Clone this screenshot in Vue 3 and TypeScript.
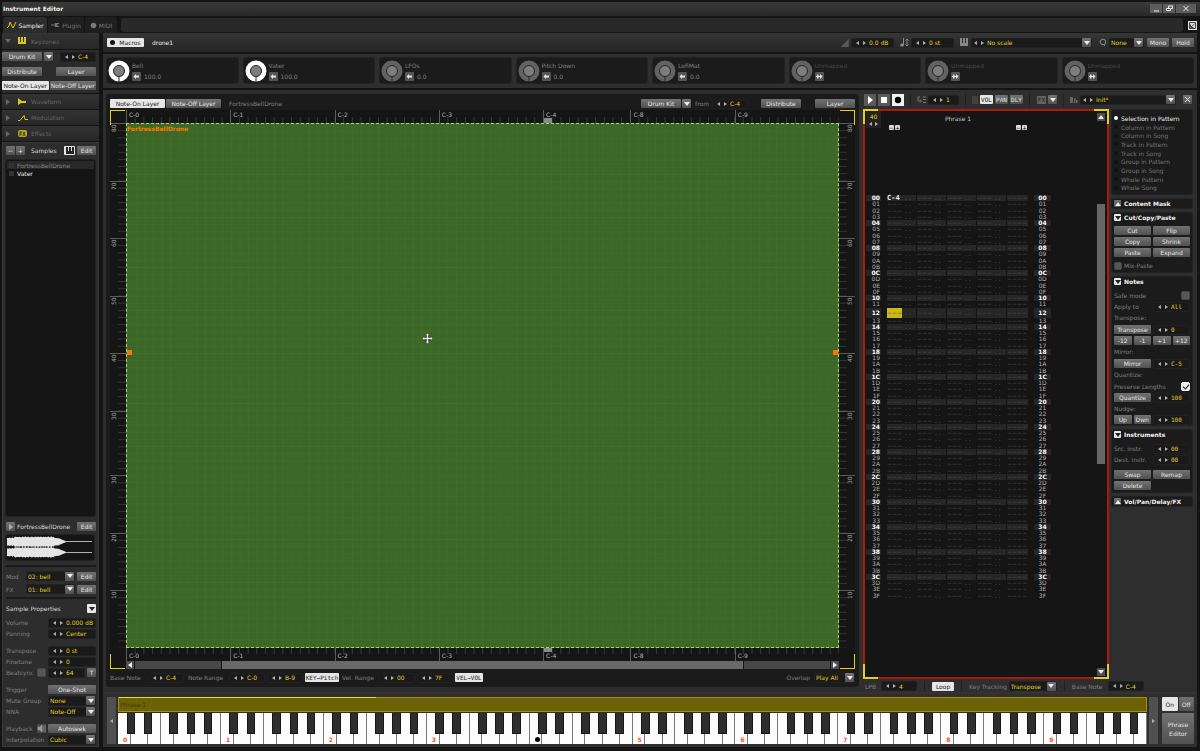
<script setup lang="ts">
import { h } from 'vue'
import type { FunctionalComponent } from 'vue'

const Spin: FunctionalComponent<{ label: string; value: string }> = (p) =>
  h('span', { class: 'spin' }, [
    h('button', { class: 'arr', 'aria-label': `${p.label} down` }, [h('i', { class: 'tri left' })]),
    h('button', { class: 'arr', 'aria-label': `${p.label} up` }, [h('i', { class: 'tri right' })]),
    h('input', { type: 'text', value: p.value, 'aria-label': p.label }),
  ])
Spin.props = ['label', 'value']

const Combo: FunctionalComponent<{ label: string; value: string; step?: boolean }> = (p) =>
  h('span', { class: 'combo' }, [
    ...(p.step !== undefined
      ? [
          h('button', { class: 'arr', 'aria-label': `Previous ${p.label}` }, [h('i', { class: 'tri left' })]),
          h('button', { class: 'arr', 'aria-label': `Next ${p.label}` }, [h('i', { class: 'tri right' })]),
        ]
      : []),
    h('select', { 'aria-label': p.label }, [h('option', p.value)]),
    h('span', { class: 'dd' }, [h('i', { class: 'tri down' })]),
  ])
Combo.props = ['label', 'value', 'step']

interface Macro { name: string; value?: string; full?: boolean }
const macros: Macro[] = [
  { name: 'Bell', value: '100.0', full: true },
  { name: 'Vater', value: '100.0', full: true },
  { name: 'LFOs', value: '0.0' },
  { name: 'Pitch Down', value: '0.0' },
  { name: 'LofiMat', value: '0.0' },
  { name: 'Unmapped' },
  { name: 'Unmapped' },
  { name: 'Unmapped' },
]

const octaves = [
  { name: 'C-0', n: 12 }, { name: 'C-1', n: 12 }, { name: 'C-2', n: 12 }, { name: 'C-3', n: 12 },
  { name: 'C-4', n: 10 }, { name: 'C-8', n: 12 }, { name: 'C-9', n: 12 },
]
const velocities = [
  { name: '80', n: 8 }, { name: '70', n: 8 }, { name: '60', n: 8 }, { name: '50', n: 8 }, { name: '40', n: 8 },
  { name: '30', n: 9 }, { name: '30', n: 8 }, { name: '20', n: 8 }, { name: '10', n: 8 },
]

const EMPTY = '−−−'
const rows = Array.from({ length: 64 }, (_, i) => ({
  id: i.toString(16).toUpperCase().padStart(2, '0'),
  beat: i % 4 === 0,
  cursor: i === 18,
  first: i === 0 ? 'C-4' : EMPTY,
}))

const scopes = [
  'Selection in Pattern', 'Column in Pattern', 'Column in Song', 'Track in Pattern', 'Track in Song',
  'Group in Pattern', 'Group in Song', 'Whole Pattern', 'Whole Song',
]
const whites = ['C', 'D', 'E', 'F', 'G', 'A', 'B']
const blacks = ['C#', 'D#', 'F#', 'G#', 'A#']

function wave(mid: number): string {
  const top: string[] = []
  const bottom: string[] = []
  for (let x = 1; x <= 89; x++) {
    const noise = Math.abs(Math.sin(x * 7.3) + Math.sin(x * 2.9)) * 0.5
    let a = 0.4
    if (x < 54) a = 4.2 + noise + (x > 8 && x < 50 ? 0.4 : -0.6)
    else if (x < 62) a = 3.8 - (x - 54) * 0.42
    top.push(`${x},${(mid - a).toFixed(1)}`)
    bottom.unshift(`${x},${(mid + a).toFixed(1)}`)
  }
  return [...top, ...bottom].join(' ')
}
const waves = [wave(7), wave(18)]
</script>

<template>
  <div class="app">
    <header class="title">
      <h1>Instrument Editor</h1>
      <div class="win">
        <button aria-label="Minimize"><svg width="12" height="9"><path d="M4 7h5" stroke="#eee" /></svg></button>
        <button aria-label="Restore"><svg width="12" height="9"><path d="M3.500 4.500h4v2h-4zM5.500 4V2h4v2.500H8" fill="none" stroke="#eee" /></svg></button>
        <button class="wide" aria-label="Close"><svg width="20" height="9"><path d="M7.500 2l5 5M12.500 2l-5 5" stroke="#eee" /></svg></button>
      </div>
    </header>

    <nav class="tabs">
      <button class="tab on"><svg width="10" height="8"><path d="M0 7l2-2 1-4 3 6 1-2 2-4" fill="none" stroke="#d8c81e" /></svg>Sampler</button>
      <button class="tab"><svg width="9" height="8"><path d="M0 4h3M4 2.500h2v3H4zM6 2.500h2M6 5.500h2" fill="#777" stroke="#777" /></svg>Plugin</button>
      <button class="tab midi"><svg width="7" height="7"><circle cx="3.500" cy="3.500" r="2.800" fill="#777" /></svg>MIDI</button>
      <div class="tabfill"></div>
      <button class="detach" aria-label="Detach"><svg width="9" height="9"><path d="M1.500 1.500h6v6h-6zM2.500 3.500v3h3M3 6l3.500-3" fill="none" stroke="#444" /></svg></button>
    </nav>

    <div class="body">
      <aside class="side">
        <h2 class="sec first"><i class="tri down dim"></i><svg width="9" height="8"><path d="M0 0h2v5h1V0h2v5h1V0h2v7H0z" fill="#d8c81e" /></svg>Keyzones</h2>
        <div class="kz">
          <div class="line"><button class="btn w40">Drum Kit</button><button class="dd" aria-label="Drum kit options"><i class="tri down"></i></button><Spin class="push w36" label="Kit start note" value="C-4" /></div>
          <div class="line two-btn"><button class="btn w40">Distribute</button><button class="btn w40 push">Layer</button></div>
          <div class="line seg"><button class="btn on">Note-On Layer</button><button class="btn">Note-Off Layer</button></div>
        </div>
        <h2 class="sec"><i class="tri right dim"></i><svg width="9" height="8"><path d="M0 0v7l3-2h5V3H4z" fill="#d8c81e" /></svg>Waveform</h2>
        <h2 class="sec"><i class="tri right dim"></i><svg width="11" height="8"><path d="M0 6.500h2l4-5 1 4h4" fill="none" stroke="#d8c81e" /></svg>Modulation</h2>
        <h2 class="sec"><i class="tri right dim"></i><svg width="10" height="8"><rect width="9" height="7" rx="2" fill="#b5a71c" /><path d="M2 6V2h2M2 4h2M5 2l2 4M7 2L5 6" fill="none" stroke="#292708" stroke-width=".8" /></svg>Effects</h2>

        <section class="samples">
          <div class="line head">
            <button class="btn sq">−</button><button class="btn sq plus">+</button>
            <b>Samples</b>
            <button class="btn on ico" aria-label="Keyboard"><svg width="8" height="7"><path d="M0 0h2v4h1V0h2v4h1V0h2v7H0z" fill="#222" /></svg></button>
            <button class="btn w19 ed">Edit</button>
          </div>
          <ul class="list">
            <li class="sel"><i></i>FortressBellDrone</li>
            <li><i></i>Vater</li>
          </ul>
          <div class="line play">
            <button class="dd" aria-label="Play sample"><i class="tri right"></i></button><span>FortressBellDrone</span><button class="btn w19 push">Edit</button>
          </div>
          <svg class="wave" viewBox="0 0 91 26" preserveAspectRatio="none"><polygon v-for="w in waves" :key="w" :points="w" fill="#e4e4e4" /></svg>
          <hr />
          <div class="line mod"><label>Mod</label><Combo label="Mod" value="02: bell" /><button class="btn w19">Edit</button></div>
          <div class="line mod"><label>FX</label><Combo label="FX" value="01: bell" /><button class="btn w19">Edit</button></div>
          <hr />
          <div class="line props"><span>Sample Properties</span><button class="dd inv push" aria-label="Collapse properties"><i class="tri down"></i></button></div>
          <div class="group">
            <div class="row"><label>Volume</label><Spin label="Volume" value="0.000 dB" /></div>
            <div class="row"><label>Panning</label><Spin label="Panning" value="Center" /></div>
          </div>
          <div class="group">
            <div class="row"><label>Transpose</label><Spin label="Transpose" value="0 st" /></div>
            <div class="row"><label>Finetune</label><Spin label="Finetune" value="0" /></div>
            <div class="row beatsync"><label for="beat">Beatsync</label><input id="beat" type="checkbox" class="chk" /><Spin label="Beatsync lines" value="64" /><button class="btn t">T</button></div>
          </div>
          <div class="group">
            <div class="row"><label>Trigger</label><button class="btn">One-Shot</button></div>
            <div class="row"><label>Mute Group</label><Combo label="Mute Group" value="None" /></div>
            <div class="row"><label>NNA</label><Combo label="NNA" value="Note-Off" /></div>
          </div>
          <div class="group">
            <div class="row beatsync"><label>Playback</label><button class="spk" aria-label="Playback monitor"><svg width="9" height="9"><path d="M1 3h2l2-2v7L3 6H1zM6 2v5M8 1v7" fill="#999" stroke="#999" stroke-width=".7" /></svg></button><button class="btn">Autoseek</button></div>
            <div class="row"><label>Interpolation</label><Combo label="Interpolation" value="Cubic" /></div>
          </div>
        </section>
      </aside>

      <main class="main">
        <div class="instbar">
          <button class="btn on macrobtn"><i></i>Macros</button>
          <span class="iname">drone1</span>
          <svg class="push" width="8" height="8"><path d="M0 8h7.500V0z" fill="#6c6c6c" /><path d="M2 8V5M4 8V3M6 8V1" stroke="#303030" stroke-width=".6" /></svg>
          <Spin class="w43" label="Instrument volume" value="0.0 dB" />
          <svg class="gi" width="9" height="9"><ellipse cx="2" cy="7" rx="2" ry="1.500" fill="#888" /><path d="M3.500 7V0M7 1v7M5.500 2.500L7 1l1.500 1.500M5.500 6.500L7 8l1.500-1.500" fill="none" stroke="#888" /></svg>
          <Spin class="w43" label="Instrument transpose" value="0 st" />
          <svg class="gi" width="9" height="9"><path d="M0 0h2v5h1V0h2v5h1V0h2v8H0z" fill="#888" /></svg>
          <Combo class="scale" label="scale" value="No scale" step />
          <svg class="gi q" width="8" height="9"><circle cx="4" cy="4" r="2.800" fill="none" stroke="#888" /><path d="M4 6l2 2" stroke="#888" /></svg>
          <Combo class="w35" label="Trigger quantize" value="None" />
          <button class="btn w22">Mono</button>
          <button class="btn w22">Hold</button>
        </div>

        <div class="macros">
          <div v-for="(m, i) in macros" :key="i" class="macro" :class="{ off: !m.value }">
            <svg width="24" height="24" viewBox="0 0 24 24">
              <circle cx="12" cy="12" r="8" fill="none" :stroke="m.full ? '#fff' : '#626262'" stroke-width="5" />
              <circle cx="12" cy="12" r="5.500" fill="#7d7d7d" stroke="#2b2b2b" />
              <path d="M12 17v6" stroke="#2b2b2b" />
            </svg>
            <div>
              <span>{{ m.name }}</span>
              <p><button class="map" :aria-label="'Map ' + m.name"><svg width="9" height="9"><path :d="m.value ? 'M1.500 4.500L4 2v1.500h3v2H4V7z' : 'M2 2.500h1.500v4H2zM5 2l2.500 2.500L5 7zM1 4h5v1H1z'" fill="#e6e6e6" /></svg></button>{{ m.value }}</p>
            </div>
          </div>
        </div>

        <div class="work">
          <section class="editor">
            <div class="etool">
              <button class="btn on w55">Note-On Layer</button><button class="btn w55">Note-Off Layer</button>
              <span class="ename">FortressBellDrone</span>
              <button class="btn w40 push">Drum Kit</button><button class="dd" aria-label="Drum kit menu"><i class="tri down"></i></button>
              <span class="from">from</span><Spin class="w36" label="From note" value="C-4" />
              <button class="btn w40 dist">Distribute</button><button class="btn w40 lay">Layer</button>
            </div>
            <div class="zone">
              <i class="corner tl"></i><i class="corner tr"></i><i class="corner bl"></i><i class="corner br"></i>
              <div class="hruler top"><span v-for="o in octaves" :key="o.name" :class="{ base: o.name === 'C-4' }" :style="{ flex: o.n }">{{ o.name }}</span></div>
              <div class="vruler"><span v-for="(v, i) in velocities" :key="i" :style="{ flex: v.n }"><em>{{ v.name }}</em></span></div>
              <div class="green">
                <b>FortressBellDrone</b>
                <i class="handle l"></i><i class="handle r"></i>
                <svg class="move" width="11" height="11" viewBox="0 0 13 13"><path d="M6.500 0L9 3H7.500v2.500H10V4l3 2.500L10 9V7.500H7.500V10H9l-2.500 3L4 10h1.500V7.500H3V9L0 6.500 3 4v1.500h2.500V3H4z" fill="#fff" stroke="#222" stroke-width=".6" /></svg>
              </div>
              <div class="vruler r"><span v-for="(v, i) in velocities" :key="i" :style="{ flex: v.n }"><em>{{ v.name }}</em></span></div>
              <div class="hruler bottom"><span v-for="o in octaves" :key="o.name" :class="{ base: o.name === 'C-4' }" :style="{ flex: o.n }">{{ o.name }}</span></div>
              <div class="hscroll">
                <button class="sbtn" aria-label="Scroll left"><i class="tri left"></i></button>
                <i class="trk"></i><i class="thumb"></i><i class="trk"></i>
                <button class="sbtn" aria-label="Scroll right"><i class="tri right"></i></button>
              </div>
            </div>
            <div class="efoot">
              <label class="l1">Base Note</label><Spin class="w36" label="Base Note" value="C-4" />
              <label class="l2">Note Range</label><Spin class="w36" label="Note from" value="C-0" /><Spin class="w36" label="Note to" value="B-9" />
              <button class="btn on mini w34">KEY→Pitch</button>
              <label class="l3">Vel. Range</label><Spin class="w36" label="Velocity from" value="00" /><Spin class="w36" label="Velocity to" value="7F" />
              <button class="btn on mini w28">VEL→VOL</button>
              <label class="push">Overlap</label><Combo class="w41" label="Overlap" value="Play All" />
            </div>
          </section>

          <section class="phrase">
            <div class="ptool">
              <button class="transport" aria-label="Play"><svg width="12" height="12"><path d="M4 2l5 4-5 4z" fill="#fff" /></svg></button>
              <button class="transport" aria-label="Stop"><svg width="12" height="12"><path d="M3 3h6v6H3z" fill="#fff" /></svg></button>
              <button class="transport on" aria-label="Record"><svg width="12" height="12"><circle cx="6" cy="6" r="3.200" fill="#000" /></svg></button>
              <i class="sep"></i>
              <svg width="9" height="8"><path d="M3 1H1v4h3M3 3.500L4.500 5 3 6.500M6 1h3M6 3.500h3M6 6.500h3" fill="none" stroke="#777" /></svg>
              <Spin class="w31" label="Edit step" value="1" />
              <i class="sep"></i>
              <svg width="6" height="8"><path d="M0 1h6M0 3h6M0 5h6M0 7h6" stroke="#555" /></svg>
              <button class="btn mini on w13">VOL</button><button class="btn mini w13">PAN</button><button class="btn mini w13">DLY</button>
              <i class="sep"></i>
              <span class="fx">FX</span><button class="dd" aria-label="Effect columns"><i class="tri down"></i></button>
              <i class="sep"></i>
              <svg width="8" height="8"><path d="M0 1h3v6H0zM4 2h1.500v5H4zM6 4h1.500v3H6z" fill="#666" /></svg>
              <Combo class="preset" label="preset" value="Init*" step />
              <button class="dd x" aria-label="Close phrase editor"><svg width="9" height="9"><path d="M2 2l5 5M7 2L2 7" stroke="#eee" /></svg></button>
            </div>

            <div class="pmid">
              <div class="pattern">
                <i class="corner tl"></i><i class="corner tr"></i><i class="corner bl"></i><i class="corner br"></i>
                <div class="pcol">
                  <div class="phead">
                    <div class="len"><span>40</span><p><i class="tri left"></i><i class="tri right"></i></p></div>
                    <div class="pt">
                      <span>Phrase 1</span>
                      <p><button aria-label="Fewer note columns">−</button><button aria-label="More note columns">+</button><button class="push" aria-label="Fewer effect columns">−</button><button aria-label="More effect columns">+</button></p>
                    </div>
                  </div>
                  <table>
                    <tbody>
                      <tr v-for="r in rows" :key="r.id" :class="{ beat: r.beat, cur: r.cursor }">
                        <th>{{ r.id }}</th>
                        <td class="n" :class="{ note: r.first !== EMPTY }"><span>{{ r.first }}</span></td><td class="d">. .</td>
                        <td class="n">{{ EMPTY }}</td><td class="d">. .</td>
                        <td class="n">{{ EMPTY }}</td><td class="d">. .</td>
                        <td class="n">{{ EMPTY }}</td><td class="d">. .</td>
                        <td class="f">−−−−</td>
                        <th class="r">{{ r.id }}</th>
                      </tr>
                    </tbody>
                  </table>
                </div>
                <div class="vscroll">
                  <button class="sbtn" aria-label="Scroll up"><i class="tri up"></i></button>
                  <i class="thumb"></i>
                  <button class="sbtn" aria-label="Scroll down"><i class="tri down"></i></button>
                </div>
              </div>

              <div class="tools">
                <div class="box scopes">
                  <label v-for="(s, i) in scopes" :key="s"><input type="radio" name="scope" :checked="i === 0" />{{ s }}</label>
                </div>
                <div class="box"><h3><button class="dd s" aria-label="Expand"><i class="tri up"></i></button>Content Mask</h3></div>
                <div class="box">
                  <h3><button class="dd s inv" aria-label="Collapse"><i class="tri down"></i></button>Cut/Copy/Paste</h3>
                  <div class="grid2 ccp">
                    <button class="btn">Cut</button><button class="btn">Flip</button>
                    <button class="btn">Copy</button><button class="btn">Shrink</button>
                    <button class="btn">Paste</button><button class="btn">Expand</button>
                  </div>
                  <label class="mix"><input type="checkbox" class="chk" />Mix-Paste</label>
                </div>
                <div class="box">
                  <h3><button class="dd s inv" aria-label="Collapse"><i class="tri down"></i></button>Notes</h3>
                  <div class="grid2 notes">
                    <label class="lab" for="safe">Safe mode</label><input id="safe" type="checkbox" class="chk end" />
                    <label class="lab">Apply to</label><Spin class="mono" label="Apply to" value="All" />
                    <span class="lab all cap">Transpose:</span>
                    <button class="btn">Transpose</button><Spin class="mono" label="Transpose by" value="0" />
                    <div class="four all"><button class="btn">-12</button><button class="btn">-1</button><button class="btn">+1</button><button class="btn">+12</button></div>
                    <span class="lab all cap">Mirror:</span>
                    <button class="btn">Mirror</button><Spin class="mono" label="Mirror note" value="C-5" />
                    <span class="lab all cap">Quantize:</span>
                    <div class="all pl"><label class="lab" for="pres">Preserve Lengths</label><input id="pres" type="checkbox" class="chk end" checked /></div>
                    <button class="btn">Quantize</button><Spin class="mono" label="Quantize lines" value="100" />
                    <span class="lab all">Nudge:</span>
                    <div class="two"><button class="btn">Up</button><button class="btn">Dwn</button></div><Spin class="mono" label="Nudge amount" value="100" />
                  </div>
                </div>
                <div class="box">
                  <h3><button class="dd s inv" aria-label="Collapse"><i class="tri down"></i></button>Instruments</h3>
                  <div class="grid2 ins">
                    <label class="lab">Src. instr.</label><Spin class="mono" label="Source instrument" value="00" />
                    <label class="lab">Dest. instr.</label><Spin class="mono" label="Destination instrument" value="00" />
                  </div>
                  <div class="grid2 swap"><button class="btn">Swap</button><button class="btn">Remap</button><button class="btn">Delete</button></div>
                </div>
                <div class="box"><h3><button class="dd s" aria-label="Expand"><i class="tri up"></i></button>Vol/Pan/Delay/FX</h3></div>
              </div>
            </div>

            <div class="pfoot">
              <label>LPB</label><Spin class="w36" label="Lines per beat" value="4" />
              <i class="sep"></i><button class="btn on w22">Loop</button>
              <i class="sep"></i><label>Key Tracking</label><Combo class="w48" label="Key Tracking" value="Transpose" />
              <i class="sep"></i><label>Base Note</label><Spin class="w36" label="Phrase base note" value="C-4" />
            </div>
          </section>
        </div>

        <section class="keys">
          <button class="gut" aria-label="Scroll keyboard left"><i class="tri left"></i></button>
          <div class="kb">
            <div class="pbar"><i></i><span>Phrase 1</span></div>
            <div class="piano">
              <div v-for="o in 10" :key="o" class="oct">
                <button v-for="w in whites" :key="w" class="wk" :class="'k' + w" :aria-label="w + (o - 1)"><template v-if="w === 'C'"><i v-if="o === 5"></i><template v-else>{{ o - 1 }}</template></template></button>
                <button v-for="(b, j) in blacks" :key="b" class="bk" :class="'b' + j" :aria-label="b + (o - 1)"></button>
              </div>
            </div>
          </div>
          <button class="gut" aria-label="Scroll keyboard right"><i class="tri right"></i></button>
          <div class="ped">
            <div><button class="btn on">On</button><button class="btn">Off</button></div>
            <button class="btn big">Phrase<br />Editor</button>
          </div>
        </section>
      </main>
    </div>
  </div>
</template>

<style>
html, body { background: #141414; }
body { margin: 0; }
</style>

<style scoped>
.app { min-height: 100vh; box-sizing: border-box; padding: 2px 2px 4px; display: flex; flex-direction: column; background: #141414; color: #808080; font: 6px/9px "DejaVu Sans", sans-serif; }
.app, .app :deep(*) { box-sizing: border-box; }
.app :deep(button), .app :deep(input), .app :deep(select) { font: inherit; color: inherit; border: 0; margin: 0; padding: 0; border-radius: 0; background: none; }
h1, h2, h3, p, ul { margin: 0; padding: 0; font: inherit; }
svg { display: block; flex: none; }
.app :deep(.tri) { display: block; width: 0; height: 0; border: 2px solid transparent; flex: none; }
.app :deep(.tri.left) { border-width: 3px 4px 3px 0; border-right-color: #b0b0b0; }
.app :deep(.tri.right) { border-width: 3px 0 3px 4px; border-left-color: #b0b0b0; }
.app :deep(.tri.down) { border-width: 4px 3px 0; border-top-color: #eee; }
.app :deep(.tri.up) { border-width: 0 3px 4px; border-bottom-color: #eee; }
.app :deep(.tri.dim.down) { border-top-color: #666; }
.app :deep(.tri.dim.right) { border-left-color: #666; }
.app :deep(.spin), .app :deep(.combo) { display: flex; align-items: center; height: 10px; min-width: 0; background: #1a1a1a; border: 1px solid #212121; border-radius: 2px; color: #e2d324; }
.app :deep(.spin) { padding-left: 2px; }
.app :deep(.arr) { width: 7px; height: 8px; display: grid; place-items: center; flex: none; }
.app :deep(.arr .tri.left) { border-width: 2px 3px 2px 0; }
.app :deep(.arr .tri.right) { border-width: 2px 0 2px 3px; }
.app :deep(.spin input) { flex: 1; width: 0; min-width: 0; height: 9px; margin-left: 1px; }
.app :deep(.combo select) { flex: 1; width: 0; min-width: 0; height: 9px; appearance: none; padding-left: 1px; line-height: 9px; }
.app :deep(.dd) { width: 9px; height: 9px; display: grid; place-items: center; flex: none; background: linear-gradient(#747474, #515151); border-radius: 1px; }
.app :deep(.dd.inv) { background: #e8e8e8; }
.app :deep(.dd.inv .tri) { border-top-color: #222; }
.app :deep(.mono input) { font-family: "DejaVu Sans Mono", monospace; }
.app .btn { height: 9px; line-height: 9px; text-align: center; white-space: nowrap; color: #e6e6e6; background: linear-gradient(#727272, #515151); border-radius: 1px; }
.app .btn.on { background: #e6e6e6; color: #1c1c1c; }
.app .push { margin-left: auto; }
.w13 { width: 13px; } .w19 { width: 19px; } .w22 { width: 22px; } .w28 { width: 28px; } .w31 { width: 31px; } .w34 { width: 34px; } .w35 { width: 35px; }
.w36 { width: 36px; } .w40 { width: 40px; } .w41 { width: 41px; } .w43 { width: 43px; } .w48 { width: 48px; } .w55 { width: 55px; }
.app .chk { appearance: none; width: 9px; height: 9px; flex: none; background: #575757; border: 1px solid #474747; border-radius: 2px; }
.app .chk:checked { background: #f0f0f0; border-color: #f0f0f0; }
.chk:checked::after { content: ""; display: block; width: 3px; height: 5px; margin-left: 2px; border: solid #111; border-width: 0 1px 1px 0; transform: rotate(40deg); }
.app .mini { font-family: "DejaVu Sans Mono", monospace; }

.title { height: 14px; margin-right: -2px; display: flex; align-items: center; padding-right: 4px; background: linear-gradient(#3a3a3a, #292929); }
.title h1 { font-weight: bold; color: #f0f0f0; margin-left: 1px; padding-bottom: 2px; }
.win { margin-left: auto; display: flex; gap: 1px; padding-bottom: 1px; }
.app .win button { width: 12px; height: 9px; background: #5c5c5c; }
.app .win .wide { width: 20px; }
.tabs { height: 16px; margin-top: 1px; display: flex; align-items: stretch; padding-right: 1px; }
.app .tab { display: flex; align-items: center; gap: 2px; width: 36px; justify-content: center; margin-right: 1px; background: #1f1f1f; color: #777; border-radius: 3px 3px 0 0; }
.app .tab.on { width: 44px; background: #2c2c2c; color: #f0f0f0; margin-left: 1px; }
.app .tab.midi { width: 32px; }
.tabfill { flex: 1; margin: 1px 5px 1px 3px; background: #292929; border-radius: 3px; }
.app .detach { align-self: center; width: 9px; height: 9px; background: #e0e0e0; }
.body { flex: 1; display: flex; gap: 4px; }

.side { width: 97px; flex: none; display: flex; flex-direction: column; }
.sec { height: 15px; margin-bottom: 1px; padding-left: 3px; display: flex; align-items: center; color: #666; background: linear-gradient(#333, #272727); }
.sec.first { height: 16px; }
.sec .tri { margin-right: 7px; }
.sec .tri.right { margin-left: 1px; margin-right: 8px; }
.sec svg { margin-right: 3px; width: 10px; }
.line { display: flex; align-items: center; }
.kz { background: #2b2b2b; padding: 2px 3px 3px 0; margin-bottom: 1px; }
.kz .line { height: 9px; margin-bottom: 6px; gap: 2px; }
.kz .line.two-btn { margin-bottom: 5px; }
.kz .line.seg { margin-bottom: 0; gap: 1px; }
.kz .seg .btn { flex: 1; }
.samples { flex: 1; display: flex; flex-direction: column; padding: 3px 2px 1px 3px; background: #2d2d2d; border: 1px solid #383838; }
.head { gap: 1px; }
.head b { color: #dcdcdc; font-weight: normal; margin-left: 5px; margin-right: auto; }
.sq { width: 9px; }
.app .ico { width: 11px; display: grid; place-items: center; }
.app .head .ed { margin-left: 1px; }
.list { flex: 1; list-style: none; margin: 4px 0 5px -1px; padding: 1px; background: #151515; border: 1px solid #212121; border-radius: 3px; color: #eee; }
.list li { display: flex; align-items: center; height: 9px; padding-left: 2px; gap: 3px; }
.list li i { width: 5px; height: 5px; background: #333; }
.list .sel { height: 8px; background: #282828; color: #858585; }
.play span { color: #dadada; margin-left: 2px; white-space: nowrap; }
.wave { width: 100%; height: 27px; margin: 3px 0 4px -1px; background: #151515; border: 1px solid #212121; border-radius: 3px; }
.samples hr { width: 100%; border: 0; height: 2px; margin: 0 0 4px; background: #1a1a1a; }
.mod { height: 10px; gap: 2px; margin-bottom: 3px; }
.mod label { width: 18px; }
.mod .combo { flex: 1; }
.props { color: #dadada; margin: 1px 0 4px; }
.group { margin-bottom: 6px; }
.group:last-child { margin-bottom: 0; }
.row { display: flex; align-items: center; height: 11px; white-space: nowrap; }
.row label { width: 42px; flex: none; }
.row.beatsync label { width: 31px; }
.row > .btn, .row > .spin, .row > .combo { flex: 1; }
.app .row .chk, .app .spk { margin-right: 2px; }
.row.beatsync > .btn.t { flex: none; width: 9px; }
.app .btn.t { margin-left: 2px; }
.app .spk { width: 9px; height: 9px; background: #484848; flex: none; }

.main { flex: 1; min-width: 0; display: flex; flex-direction: column; padding-right: 1px; }
.instbar { height: 19px; margin-bottom: 2px; display: flex; align-items: center; padding: 0 3px 0 4px; background: linear-gradient(#363636, #252525); }
.instbar > .spin, .instbar > .combo { margin-left: 2px; }
.app .macrobtn { width: 37px; display: flex; align-items: center; justify-content: center; gap: 4px; }
.macrobtn i { width: 5px; height: 5px; border-radius: 50%; background: #111; }
.iname { margin-left: 8px; color: #ececec; }
.gi { margin-left: 6px; }
.scale { width: 121px; }
.gi.q { margin-left: 7px; }
.app .instbar .w22 { margin-left: 3px; }
.macros { display: grid; grid-template-columns: repeat(8, 1fr); gap: 4px; padding: 3px 3px 4px; margin-bottom: 2px; background: #2e2e2e; }
.macro { height: 27px; display: flex; align-items: center; gap: 1px; background: #1b1b1b; border: 1px solid #222; border-radius: 3px; }
.macro p { display: flex; gap: 3px; height: 9px; margin-top: 2px; }
.macro.off span { color: #484848; }
.app .map { width: 9px; height: 9px; background: #555; border-radius: 1px; }

.work { flex: 1; display: flex; background: #2e2e2e; }
.editor { flex: 1; min-width: 0; display: flex; flex-direction: column; margin: 4px 4px 5px 3px; padding: 4px; background: #1b1b1b; border-radius: 3px; }
.etool { display: flex; align-items: center; height: 11px; gap: 1px; }
.ename { margin-left: 7px; }
.from { margin: 0 2px 0 3px; }
.app .etool .dist { margin-left: 12px; }
.app .etool .lay { margin-left: 13px; }
.zone { flex: 1; position: relative; display: grid; grid-template-columns: 16px 1fr 16px; grid-template-rows: 13px 1fr 13px 8px; margin-top: 1px; background: #151515; }
.corner { position: absolute; width: 15px; height: 15px; border: 0 solid #e2cf1a; z-index: 1; }
.corner.tl { left: 0; top: 0; border-width: 1px 0 0 1px; }
.corner.tr { right: 0; top: 0; border-width: 1px 1px 0 0; }
.corner.bl { left: 0; bottom: 0; border-width: 0 0 1px 1px; }
.corner.br { right: 0; bottom: 0; border-width: 0 1px 1px 0; }
.hruler { grid-column: 2; display: flex; background-image: linear-gradient(90deg, #383838 1px, transparent 1px); background-size: calc(100% / 82) 6px; background-repeat: repeat-x; }
.hruler.top { background-position: 0 100%; }
.hruler span { position: relative; border-left: 1px solid #5c5c5c; padding-left: 2px; line-height: 9px; color: #b5b5b5; }
.hruler.bottom span { padding-top: 3px; }
.base::after { content: ""; position: absolute; left: 0; bottom: 0; width: 8px; height: 5px; background: #8a8a8a; }
.bottom .base::after { top: 0; bottom: auto; height: 4px; }
.vruler { grid-row: 2; grid-column: 1; display: flex; flex-direction: column; background-image: linear-gradient(#363636 1px, transparent 1px); background-size: 8px calc(100% / 73); background-repeat: repeat-y; background-position: 100% 0; }
.vruler.r { grid-column: 3; background-position: 0 0; }
.vruler span { border-top: 1px solid #5a5a5a; }
.vruler em { display: block; writing-mode: vertical-rl; transform: rotate(180deg); font-style: normal; line-height: 8px; width: 8px; height: 9px; text-align: center; color: #a8a8a8; }
.vruler.r em { margin-left: 7px; }
.green { grid-row: 2; grid-column: 2; position: relative; border: 1px dashed #a9cf7c; background-color: #3c6726; background-image: linear-gradient(90deg, #406d2a 1px, transparent 1px), linear-gradient(#406d2a 1px, transparent 1px); background-size: calc(100% / 82) 100%, 100% calc(100% / 73); }
.green b { display: block; color: #ff7600; line-height: 9px; }
.handle { position: absolute; top: calc(100% * 32 / 73 - 3px); width: 5px; height: 5px; background: #ff7200; }
.handle.l { left: 0; } .handle.r { right: 0; }
.move { position: absolute; left: calc(100% * 35 / 82 - 8px); top: 40%; }
.hscroll { grid-column: 2; display: flex; gap: 1px; }
.app .sbtn { width: 8px; height: 8px; display: grid; place-items: center; flex: none; background: #4e4e4e; }
.app .sbtn .tri.left { border-right-color: #eee; } .app .sbtn .tri.right { border-left-color: #eee; }
.hscroll .trk { flex: 86; background: #474747; }
.hscroll .thumb { flex: 524; background: #696969; }
.efoot { display: flex; align-items: center; height: 11px; margin-top: 3px; gap: 2px; white-space: nowrap; }
.l1 { width: 36px; } .l2 { width: 39px; margin-left: 2px; } .l3 { width: 35px; margin-left: 1px; }
.efoot .w41 { margin-left: 2px; }

.phrase { width: 334px; flex: none; display: flex; flex-direction: column; }
.ptool { height: 17px; padding: 2px 5px 0 1px; display: flex; align-items: center; gap: 2px; }
.app .transport { width: 12px; height: 12px; flex: none; background: #5a5a5a; }
.app .transport.on { background: #f2f2f2; }
.sep { width: 1px; height: 12px; background: #212121; flex: none; margin: 0 4px; }
.fx { background: #626262; color: #222; width: 9px; line-height: 8px; text-align: center; margin-left: 1px; }
.preset { flex: 1; }
.app .ptool .x { margin-left: 5px; }
.pmid { flex: 1; display: flex; gap: 2px; margin-top: 1px; padding-right: 4px; }
.pattern { flex: 1; position: relative; display: flex; background: #151515; border: 2px solid #a61e0a; margin-top: 1px; }
.pattern .corner { border-color: #e2cf1a; margin: -2px; }
.pattern .corner.tl { border-width: 2px 0 0 2px; } .pattern .corner.tr { border-width: 2px 2px 0 0; }
.pattern .corner.bl { border-width: 0 0 2px 2px; } .pattern .corner.br { border-width: 0 2px 2px 0; }
.pcol { flex: 1; padding-left: 1px; }
.phead { display: flex; height: 84px; }
.len { width: 15px; height: 17px; background: #222; color: #e2d324; text-align: center; padding-top: 1px; }
.len p { display: flex; justify-content: center; gap: 3px; padding-top: 1px; }
.len .tri.left { border-width: 2px 3px 2px 0; } .len .tri.right { border-width: 2px 0 2px 3px; }
.pt { width: 138px; margin-left: 8px; }
.pt > span { display: block; text-align: center; color: #c8c8c8; padding-top: 3px; }
.pt p { display: flex; gap: 1px; margin-top: 2px; }
.app .pt button { width: 5px; height: 5px; line-height: 5px; text-align: center; overflow: hidden; background: #ddd; color: #111; border-radius: 1px; }
table { display: block; font: 6px/6px "DejaVu Sans", sans-serif; }
tbody { display: flex; flex-direction: column; height: 404px; }
tr { display: flex; flex: 5; min-height: 0; align-items: stretch; }
tr > * { padding: 0; display: flex; align-items: center; height: 100%; overflow: visible; }
tr.cur { flex: 8; }
th { width: 15px; margin-right: 6px; padding-right: 1px; justify-content: flex-end; color: #b4b4b4; font-weight: normal; }
th.r { width: 17px; margin: 0 0 0 6px; padding: 0; justify-content: center; }
td { color: #505050; white-space: nowrap; }
td.n { width: 18px; }
td.d { width: 11px; margin-right: 1px; color: #4d7553; }
td.f { width: 21px; }
td.note { color: #eee; font: bold 7px/6px "DejaVu Sans Mono", monospace; }
.beat > *, .cur > * { background: #262626; }
.beat > th, .cur > th { color: #fff; font-weight: bold; }
.cur td:nth-child(2) span { background: #cbb815; height: 100%; display: flex; align-items: center; }
.vscroll { width: 8px; margin: 2px 2px 1px 0; display: flex; flex-direction: column; justify-content: space-between; }
.vscroll .thumb { height: 260px; background: #666; margin-bottom: 121px; }

.tools { width: 82px; margin-top: 1px; display: flex; flex-direction: column; gap: 3px; }
.box { background: #1b1b1b; border: 1px solid #222; border-radius: 3px; padding: 0 2px; }
.scopes { height: 86px; padding: 4px 2px 2px; display: flex; flex-direction: column; color: #757575; }
.scopes label { flex: 1; min-height: 0; display: flex; align-items: center; gap: 3px; white-space: nowrap; }
.app .scopes input { appearance: none; width: 4px; height: 4px; flex: none; background: #101010; border-radius: 50%; }
.app .scopes input:checked { background: #fff; }
.scopes label:first-child { color: #eee; }
.box h3 { display: flex; align-items: center; gap: 3px; height: 9px; color: #f0f0f0; font-weight: bold; white-space: nowrap; }
.app .dd.s { width: 7px; height: 7px; font-weight: normal; }
.grid2 { display: grid; grid-template-columns: 1fr 1fr; column-gap: 2px; align-items: center; }
.ccp { row-gap: 2px; margin-top: 4px; }
.mix { display: flex; align-items: center; gap: 2px; margin: 4px 0 2px; }
.app .mix .chk { width: 8px; height: 8px; }
.notes { grid-auto-rows: minmax(11px, auto); margin-top: 4px; }
.lab { white-space: nowrap; }
.lab.cap { height: 12px; line-height: 12px; }
.all { grid-column: 1 / -1; }
.app .end { margin-left: auto; }
.pl, .four, .two { display: flex; gap: 2px; align-items: center; }
.four .btn, .two .btn { flex: 1; min-width: 0; }
.ins { grid-auto-rows: 11px; margin-top: 4px; }
.swap { row-gap: 2px; margin-top: 5px; padding-bottom: 2px; }
.pfoot { height: 13px; display: flex; align-items: center; gap: 2px; white-space: nowrap; padding: 1px 0 0 2px; }
.pfoot .spin { margin-left: 3px; }
.pfoot .sep { margin: 0 5px; height: 10px; }

.keys { display: flex; height: 55px; padding: 3px 3px 3px 4px; background: #2e2e2e; border-top: 2px solid #333; }
.app .gut { width: 9px; display: grid; place-items: center; flex: none; background: #505050; }
.app .gut .tri { border-width: 2px 3px 2px 0; }
.app .gut .tri.right { border-width: 2px 0 2px 3px; }
.kb { flex: 1; min-width: 0; margin: 0 2px; display: flex; flex-direction: column; }
.pbar { height: 15px; background: #6b6108; border: 1px solid #a3930e; color: #3f3905; }
.pbar i { display: block; width: 25%; height: 1px; background: #f0de24; margin-top: -1px; }
.pbar span { padding-left: 1px; line-height: 13px; display: block; }
.piano { flex: 1; display: flex; margin-top: 1px; background: #1a1a1a; }
.oct { flex: 1; display: grid; grid-template-columns: repeat(24, 1fr); grid-template-rows: 21px 1fr; }
.app .wk { grid-row: 1 / -1; display: flex; align-items: flex-end; line-height: 8px; background: #fcfcfc; border-right: 1px solid #777; color: #ff4b2b; padding-left: 5px; font-weight: bold; }
.wk i { width: 5px; height: 5px; border-radius: 50%; background: #000; margin-bottom: 2px; }
.kC { grid-column: 1 / 4; } .kD { grid-column: 4 / 8; } .kE { grid-column: 8 / 11; } .kF { grid-column: 11 / 14; }
.kG { grid-column: 14 / 18; } .kA { grid-column: 18 / 22; } .kB { grid-column: 22 / 25; }
.app .bk { grid-row: 1; z-index: 1; background: #2e2e2e; border: 1px solid #161616; border-top-width: 0; }
.b0 { grid-column: 3 / 5; } .b1 { grid-column: 7 / 9; } .b2 { grid-column: 13 / 15; } .b3 { grid-column: 17 / 19; } .b4 { grid-column: 21 / 23; }
.ped { width: 32px; margin-left: 4px; display: flex; flex-direction: column; gap: 2px; }
.ped div { display: flex; gap: 1px; height: 14px; }
.app .ped div .btn { flex: 1; height: 14px; }
.ped .big { flex: 1; }
</style>
